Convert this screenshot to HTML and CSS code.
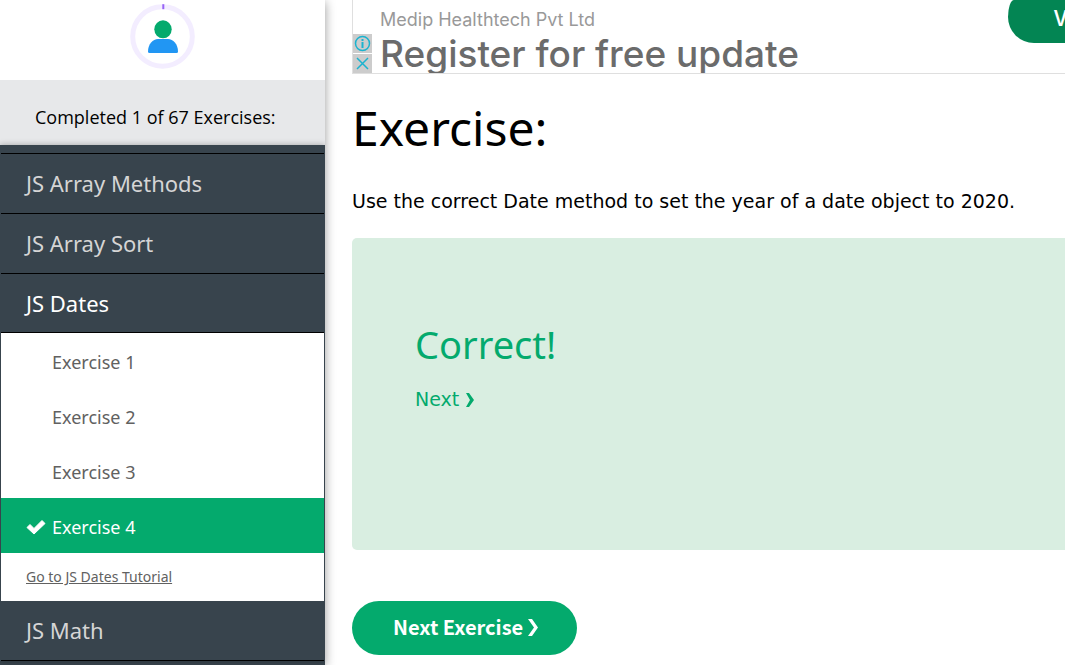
FILE: index.html
```html
<!DOCTYPE html>
<html lang="en">
<head>
<meta charset="utf-8">
<meta name="viewport" content="width=device-width, initial-scale=1">
<title>JS Exercises</title>
<link rel="stylesheet" href="styles.css">
</head>
<body>
<div class="layout">
  <aside class="sidebar">
    <div class="profile">
      <svg class="avatar" viewBox="0 0 65 66" role="img" aria-label="Profile">
        <circle cx="32.5" cy="33.5" r="29.8" fill="none" stroke="#f3edff" stroke-width="5"/>
        <path d="M33.3 1.2v5" stroke="#9763f6" stroke-width="2"/>
        <ellipse cx="33" cy="26.3" rx="8.7" ry="9" fill="#04aa6d"/>
        <path d="M18 48.5c0-7.500 5-12.500 10-12.500h10c5 0 10 5 10 12.500q0 1.500-1.500 1.500h-27q-1.500 0-1.500-1.500z" fill="#2196f3"/>
      </svg>
    </div>
    <p class="progress">Completed 1 of 67 Exercises:</p>
    <nav class="menu">
      <a class="topic" href="#">JS Array Methods</a>
      <a class="topic" href="#">JS Array Sort</a>
      <a class="topic open" href="#">JS Dates</a>
      <div class="exercises">
        <a class="exercise" href="#">Exercise 1</a>
        <a class="exercise" href="#">Exercise 2</a>
        <a class="exercise" href="#">Exercise 3</a>
        <a class="exercise current" href="#"><svg class="check" viewBox="0 0 20 16" aria-hidden="true"><path d="M1 8.500l3-3 4 4 8-8 3 3-11 10.500z" fill="#fff" stroke="#fff" stroke-linejoin="round"/></svg>Exercise 4</a>
        <a class="tutorial" href="#">Go to JS Dates Tutorial</a>
      </div>
      <a class="topic" href="#">JS Math</a>
    </nav>
  </aside>
  <main class="content">
    <section class="ad">
      <div class="ad-controls">
        <button class="ad-control" aria-label="Ad information"><svg viewBox="0 0 19 19"><circle cx="9.500" cy="9.500" r="7" fill="none" stroke="#1bb3cf" stroke-width="1.500"/><path d="M9.500 8v6M9.500 5v2" stroke="#1bb3cf" stroke-width="2"/></svg></button>
        <button class="ad-control" aria-label="Close ad"><svg viewBox="0 0 19 19"><path d="M4 4l11 11M15 4l-11 11" stroke="#1bb3cf" stroke-width="1.500"/></svg></button>
      </div>
      <div class="ad-copy">
        <span class="ad-brand">Medip Healthtech Pvt Ltd</span>
        <span class="ad-title">Register for free update</span>
      </div>
      <a class="ad-action" href="#">V</a>
    </section>
    <h1 class="heading">Exercise:</h1>
    <p class="prompt">Use the correct Date method to set the year of a date object to 2020.</p>
    <section class="result">
      <h2 class="verdict">Correct!</h2>
      <a class="result-next" href="#">Next <svg class="chevron" viewBox="0 0 10 16" aria-hidden="true"><path d="M1 1h3l5 7-5 7H1l4-7z" fill="currentColor"/></svg></a>
    </section>
    <button class="next">Next Exercise <svg class="chevron large" viewBox="0 0 11 19" aria-hidden="true"><path d="M0 1h4l6 8.500-6 8.500H0l6-8.500z" fill="currentColor"/></svg></button>
  </main>
</div>
</body>
</html>
```
FILE: styles.css
```css
* {
  box-sizing: border-box;
}

body {
  margin: 0;
  background: #fff;
  color: #000;
  font-family: "Noto Sans", "Open Sans", sans-serif;
  overflow: hidden;
}

a {
  color: inherit;
  text-decoration: none;
}

button {
  border: 0;
  padding: 0;
  cursor: pointer;
}

.layout {
  display: flex;
  height: 100vh;
}

.sidebar {
  flex: 0 0 325px;
  overflow: hidden;
  background: #38444d;
  box-shadow: 0 2px 10px rgba(0, 0, 0, 0.4);
}

.profile {
  display: flex;
  justify-content: center;
  height: 80px;
  padding-top: 3px;
  padding-right: 1px;
  background: #fff;
}

.avatar {
  width: 65px;
  height: 66px;
}

.progress {
  margin: 0;
  padding: 25px 35px 16px;
  background: #e7e8ea;
  font-family: "Open Sans", sans-serif;
  font-size: 18px;
  line-height: 24px;
}

.menu {
  padding: 8px 1px 0;
  box-shadow: 0 0 6px rgba(0, 0, 0, 0.3);
}

.topic {
  display: block;
  padding: 14px 25px;
  border-bottom: 1px solid #000;
  color: #d5d5d5;
  font-size: 22px;
  line-height: 31px;
}

.topic:first-child {
  border-top: 1px solid #000;
}

.topic.open {
  color: #fff;
  line-height: 30px;
}

.exercises {
  background: #fff;
  color: #616161;
}

.exercise {
  display: flex;
  align-items: center;
  height: 55px;
  padding: 2px 25px 0 51px;
  font-size: 18px;
}

.exercise.current {
  padding-left: 25px;
  background: #04aa6d;
  color: #fff;
}

.check {
  width: 20px;
  height: 16px;
  margin-right: 6px;
}

.tutorial {
  display: block;
  padding: 12px 25px;
  font-size: 14px;
  line-height: 24px;
  text-decoration: underline;
}

.content {
  flex: 1;
  min-width: 0;
  padding-left: 27px;
}

.ad {
  display: flex;
  height: 74px;
  border: 1px solid #dfdfdf;
  border-width: 0 0 1px 1px;
  font-family: Inter, Roboto, sans-serif;
}

.ad-controls {
  display: grid;
  align-content: end;
  gap: 1px;
}

.ad-control {
  display: block;
  width: 19px;
  height: 19px;
  background: #ccc;
}

.ad-control svg {
  display: block;
}

.ad-copy {
  flex: 1;
  overflow: hidden;
  padding: 8px 0 0 8px;
  white-space: nowrap;
}

.ad-brand,
.ad-title {
  display: block;
}

.ad-brand {
  color: #999;
  font-size: 18px;
  line-height: 24px;
}

.ad-title {
  color: #6b6b6b;
  font-size: 37px;
  font-weight: 500;
  line-height: 44px;
}

.ad-action {
  flex: 0 0 57px;
  height: 43px;
  padding: 2px 0 0 46px;
  border-radius: 6px 0 0 26px / 17px 0 0 26px;
  background: #038553;
  color: #fff;
  font: 500 22px/28px "Noto Sans CJK SC", sans-serif;
  white-space: nowrap;
  overflow: hidden;
}

.heading {
  margin: 19px 0 0;
  font-size: 48px;
  font-weight: 400;
  line-height: 70px;
}

.prompt {
  margin: 23px 0 22px;
  font-family: "DejaVu Sans", sans-serif;
  font-size: 19px;
  line-height: 30px;
}

.result {
  height: 312px;
  padding: 78px 63px;
  border-radius: 5px 0 0 5px;
  background: #d9eee1;
  color: #04aa6d;
  font-family: "DejaVu Sans", sans-serif;
}

.verdict {
  margin: 0 0 12px;
  font-family: "Noto Sans", sans-serif;
  font-size: 38px;
  font-weight: 400;
  line-height: 56px;
}

.result-next {
  font-size: 19px;
  line-height: 30px;
}

.chevron {
  width: 10px;
  height: 16px;
  vertical-align: -2px;
}

.chevron.large {
  width: 11px;
  height: 19px;
  vertical-align: -2px;
}

.next {
  height: 54px;
  margin-top: 51px;
  padding: 0 38px 2px 41px;
  border-radius: 27px;
  background: #04aa6d;
  color: #fff;
  font: bold 20px/30px "Noto Sans CJK SC", sans-serif;
}
```
